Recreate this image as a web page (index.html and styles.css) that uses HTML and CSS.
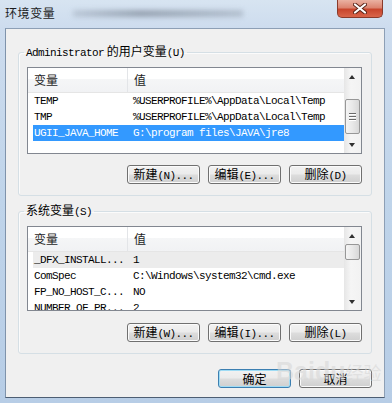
FILE: index.html
```
<!DOCTYPE html>
<html lang="zh-CN">
<head>
  <meta charset="UTF-8">
  <title>环境变量</title>
  <link rel="stylesheet" href="styles.css">
</head>
<body>
  <div class="window">
    <div class="titlebar">
      <span class="title">环境变量</span>
      <div class="ghost"></div>
      <div class="close">
        <svg width="14" height="11" viewBox="0 0 14 11">
          <path d="M2 1.5 L12 9.5 M12 1.5 L2 9.5" stroke="#5a2418" stroke-width="4" stroke-linecap="round"/>
          <path d="M2 1.5 L12 9.5 M12 1.5 L2 9.5" stroke="#ffffff" stroke-width="2.2" stroke-linecap="round"/>
        </svg>
      </div>
    </div>

    <div class="client">
      <fieldset class="group">
        <legend><span class="m">Administrator</span> 的用户变量<span class="m">(U)</span></legend>
        <div class="list user-list">
          <div class="list-main">
            <div class="lv-head">
              <div class="col1">变量</div>
              <div class="col2">值</div>
            </div>
            <div class="row"><span class="c1 m">TEMP</span><span class="c2 m">%USERPROFILE%\AppData\Local\Temp</span></div>
            <div class="row"><span class="c1 m">TMP</span><span class="c2 m">%USERPROFILE%\AppData\Local\Temp</span></div>
            <div class="row selected"><span class="c1 m">UGII_JAVA_HOME</span><span class="c2 m">G:\program files\JAVA\jre8</span></div>
          </div>
          <div class="sb">
            <div class="arrow up"></div>
            <div class="thumb thumb-user"><i></i><i></i><i></i></div>
            <div class="track"></div>
            <div class="arrow down"></div>
          </div>
        </div>
        <div class="btn-row">
          <button class="btn">新建<span class="m">(N)...</span></button>
          <button class="btn">编辑<span class="m">(E)...</span></button>
          <button class="btn">删除<span class="m">(D)</span></button>
        </div>
      </fieldset>

      <fieldset class="group group-sys">
        <legend>系统变量<span class="m">(S)</span></legend>
        <div class="list sys-list">
          <div class="list-main">
            <div class="lv-head">
              <div class="col1">变量</div>
              <div class="col2">值</div>
            </div>
            <div class="row inactive"><span class="c1 m">_DFX_INSTALL...</span><span class="c2 m">1</span></div>
            <div class="row"><span class="c1 m">ComSpec</span><span class="c2 m">C:\Windows\system32\cmd.exe</span></div>
            <div class="row"><span class="c1 m">FP_NO_HOST_C...</span><span class="c2 m">NO</span></div>
            <div class="row"><span class="c1 m">NUMBER_OF_PR...</span><span class="c2 m">2</span></div>
          </div>
          <div class="sb">
            <div class="arrow up"></div>
            <div class="thumb thumb-sys"></div>
            <div class="track"></div>
            <div class="arrow down"></div>
          </div>
        </div>
        <div class="btn-row">
          <button class="btn">新建<span class="m">(W)...</span></button>
          <button class="btn">编辑<span class="m">(I)...</span></button>
          <button class="btn">删除<span class="m">(L)</span></button>
        </div>
      </fieldset>

      <div class="footer">
        <button class="btn default">确定</button>
        <button class="btn">取消</button>
      </div>
    </div>

    <div class="watermark">Baidu<span>经验</span></div>
  </div>
</body>
</html>
```

FILE: styles.css
```
body {
  margin: 0;
  background: #ffffff;
  font-family: "Noto Sans CJK SC", sans-serif;
  font-size: 12px;
  color: #000;
}
.window {
  position: relative;
  width: 392px;
  height: 403px;
  display: flex;
  flex-direction: column;
  background: linear-gradient(180deg, #d7e4f1 0, #cddcee 28px, #bfd4ea 200px, #b7cde6 100%);
  overflow: hidden;
}
.titlebar {
  height: 28px;
  display: flex;
  align-items: flex-start;
  padding-left: 5px;
}
.title {
  margin-top: 5px;
  line-height: 16px;
  font-size: 12px;
  letter-spacing: 0.6px;
  color: #1b1b1b;
}
.ghost {
  width: 170px;
  height: 7px;
  margin: 10px 0 0 18px;
  background: linear-gradient(90deg, rgba(120,130,145,0.25), rgba(80,90,105,0.45) 40%, rgba(110,120,135,0.3));
  filter: blur(2.5px);
}
.close {
  margin-left: auto;
  margin-right: 9px;
  width: 46px;
  height: 18px;
  box-sizing: border-box;
  border: 1px solid #8a3a2a;
  border-top: none;
  border-radius: 0 0 5px 5px;
  background: linear-gradient(180deg, #eab1a2 0, #dc8470 45%, #c8452c 55%, #d9654a 100%);
  display: flex;
  justify-content: center;
  align-items: center;
}
.client {
  margin: 0 7px 5px 5px;
  flex: 1;
  background: #f0f0f0;
  border: 1px solid #8d9fb5;
  border-bottom-color: #4d5e73;
  border-left-color: #7f93ab;
  padding-top: 15px;
}
.m {
  font-family: "Liberation Mono", monospace;
  font-size: 11px;
  letter-spacing: -0.6px;
}
.group {
  margin: 0 12px;
  padding: 7px 9px 11px 8px;
  border: 1px solid #d5dfe5;
  border-radius: 3px;
  box-shadow: inset 1px 1px 0 #fbfbfb;
}
.group-sys {
  margin-top: 7px;
}
.group legend {
  padding: 0 2px;
  margin-left: -3px;
  line-height: 14px;
  color: #000;
}
.list {
  display: flex;
  border: 1px solid #828790;
  background: #fff;
  overflow: hidden;
}
.user-list {
  height: 85px;
}
.sys-list {
  height: 83px;
}
.list-main {
  flex: 1;
  overflow: hidden;
}
.lv-head {
  display: flex;
  height: 24px;
  border-bottom: 1px solid #e5e5e5;
  background: linear-gradient(180deg, #ffffff 0, #ffffff 45%, #f5f6f7 46%, #f1f2f4 100%);
  line-height: 24px;
  color: #1e1e1e;
}
.col1 {
  width: 93px;
  padding-left: 6px;
  border-right: 1px solid #e3e5e8;
}
.col2 {
  padding-left: 6px;
}
.row {
  display: flex;
  height: 16px;
  line-height: 16px;
  margin-left: 5px;
  white-space: nowrap;
}
.row .c1 {
  width: 93px;
  padding-left: 1px;
}
.row .c2 {
  padding-left: 6px;
}
.row.selected {
  background: #3399ff;
  color: #fff;
}
.row.inactive {
  background: #ececec;
}
.sb {
  width: 17px;
  display: flex;
  flex-direction: column;
  background: linear-gradient(90deg, #e6e6e6, #f5f5f5 40%, #f2f2f2);
}
.arrow {
  height: 17px;
  position: relative;
}
.arrow::after {
  content: "";
  position: absolute;
  left: 5px;
  border-left: 3.5px solid transparent;
  border-right: 3.5px solid transparent;
}
.arrow.up::after {
  top: 7px;
  border-bottom: 4px solid #303030;
}
.arrow.down::after {
  top: 7px;
  border-top: 4px solid #303030;
}
.thumb {
  margin: 0 1px;
  box-sizing: border-box;
  border: 1px solid #979797;
  border-radius: 2px;
  background: linear-gradient(90deg, #f4f4f4, #e8e8e8 50%, #d8d8d8);
  display: flex;
  flex-direction: column;
  justify-content: center;
  align-items: center;
  gap: 2px;
}
.thumb i {
  width: 7px;
  height: 1px;
  background: #6a6a6a;
  box-shadow: 0 1px 0 #fff;
}
.thumb-user {
  height: 35px;
  margin-top: 14px;
}
.thumb-sys {
  height: 16px;
}
.track {
  flex: 1;
}
.btn-row {
  display: flex;
  justify-content: flex-end;
  gap: 8px;
  margin-top: 11px;
}
.group-sys .btn-row {
  margin-top: 12px;
}
.btn {
  width: 73px;
  height: 19px;
  box-sizing: border-box;
  padding: 0;
  border: 1px solid #707070;
  border-radius: 3px;
  background: linear-gradient(180deg, #f2f2f2 0, #ebebeb 48%, #dddddd 52%, #cfcfcf 100%);
  box-shadow: inset 0 0 0 1px #fbfbfb;
  font-family: "Noto Sans CJK SC", sans-serif;
  font-size: 12px;
  line-height: 16px;
  color: #000;
}
.btn.default {
  border-color: #3c7fb1;
  box-shadow: inset 0 0 0 1px #9fdcf5;
}
.footer {
  display: flex;
  justify-content: flex-end;
  gap: 8px;
  margin: 15px 12px 0 0;
}
.watermark {
  position: absolute;
  left: 276px;
  top: 357px;
  font-family: "Liberation Sans", sans-serif;
  font-weight: bold;
  font-size: 25px;
  color: rgba(215, 215, 215, 0.6);
}
.watermark span {
  font-family: "Noto Sans CJK SC", sans-serif;
  font-weight: normal;
  font-size: 18px;
}
```
